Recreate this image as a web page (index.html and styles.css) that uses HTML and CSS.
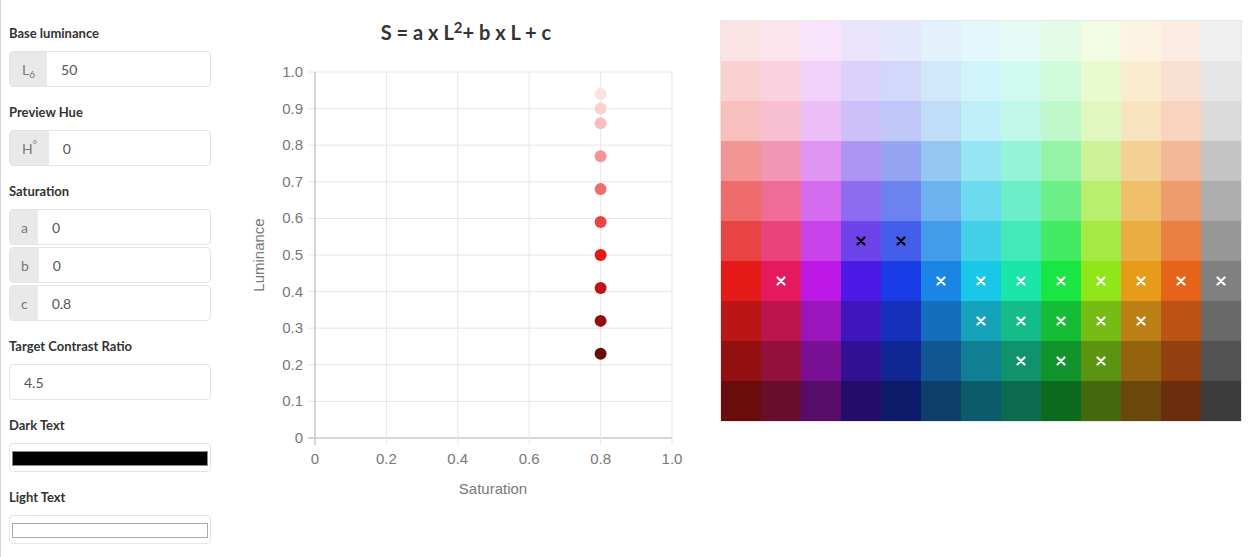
FILE: index.html
```html
<!DOCTYPE html>
<html lang="en">
<head>
  <meta charset="UTF-8" />
  <title>Saturation Curve Palette</title>
  <link rel="stylesheet" href="styles.css">
</head>
<body>
  <div class="app">
    <div class="controls">
      <div class="field">
        <label>Base luminance</label>
        <div class="input-group">
          <span class="addon">L<sub>6</sub></span>
          <input type="text" value="50" />
        </div>
      </div>

      <div class="field">
        <label>Preview Hue</label>
        <div class="input-group">
          <span class="addon">H<sup>°</sup></span>
          <input type="text" value="0" />
        </div>
      </div>

      <div class="field">
        <label>Saturation</label>
        <div class="stack">
          <div class="input-group">
            <span class="addon small">a</span>
            <input type="text" value="0" />
          </div>
          <div class="input-group">
            <span class="addon small">b</span>
            <input type="text" value="0" />
          </div>
          <div class="input-group">
            <span class="addon small">c</span>
            <input type="text" value="0.8" />
          </div>
        </div>
      </div>

      <div class="field">
        <label>Target Contrast Ratio</label>
        <div class="input-group">
          <input type="text" value="4.5" />
        </div>
      </div>

      <div class="field">
        <label>Dark Text</label>
        <div class="swatch-box"><div class="swatch dark"></div></div>
      </div>

      <div class="field">
        <label>Light Text</label>
        <div class="swatch-box"><div class="swatch light"></div></div>
      </div>
    </div>

    <div class="chart">
      <h2 class="formula">S = a x L<sup>2</sup>+ b x L + c</h2>
      <svg id="plot" width="460" height="460" viewBox="240 44 460 460">
        <g id="grid"></g>
        <g id="dots"></g>
        <text class="axis-title" x="493" y="494" text-anchor="middle">Saturation</text>
        <text class="axis-title" x="0" y="0" text-anchor="middle" transform="translate(264 255) rotate(-90)">Luminance</text>
      </svg>
    </div>

    <div class="palette" id="palette"></div>
  </div>

  <script src="app.js"></script>
</body>
</html>
```

FILE: styles.css
```css
* {
  box-sizing: border-box;
}

body {
  margin: 0;
  font-family: Lato, "Open Sans", sans-serif;
  color: #333;
  background: #fff;
}

.app {
  display: flex;
  align-items: flex-start;
  min-height: 100vh;
  border-left: 1px solid #d6d6d6;
}

.controls {
  width: 202px;
  margin-left: 8px;
  padding-top: 8px;
}

.field {
  margin-top: 16px;
}

.field label {
  display: block;
  font-size: 13px;
  font-weight: bold;
  line-height: 18px;
  margin-bottom: 9px;
}

.input-group {
  display: flex;
  height: 36px;
  border: 1px solid #e4e4e4;
  border-radius: 4px;
  overflow: hidden;
  background: #fff;
}

.stack .input-group + .input-group {
  margin-top: 2px;
}

.addon {
  display: flex;
  align-items: center;
  padding: 0 12px;
  background: #e9e9e9;
  color: #777;
  font-size: 14px;
}

.addon.small {
  padding: 0 10px 0 11px;
}

.addon sub {
  font-size: 10px;
  line-height: 0;
  margin-top: 9px;
}

.addon sup {
  font-size: 10px;
  line-height: 0;
  margin-top: -9px;
}

.input-group input {
  flex: 1;
  min-width: 0;
  border: 0;
  outline: none;
  padding: 0 14px;
  background: transparent;
  font-family: Lato, "Open Sans", sans-serif;
  font-size: 14px;
  color: #555;
}

.swatch-box {
  height: 29px;
  border: 1px solid #e4e4e4;
  border-radius: 4px;
  padding: 7px 2px 0;
}

.swatch {
  height: 15px;
  border: 1px solid #888;
}

.swatch.dark {
  background: #000;
}

.swatch.light {
  background: #fff;
  border-color: #aaa;
}

.chart {
  width: 460px;
  margin-left: 29px;
}

.formula {
  margin: 0;
  padding: 20px 8px 0 0;
  font-size: 20px;
  line-height: 24px;
  font-weight: bold;
  text-align: center;
  color: #333;
}

.formula sup {
  font-size: 15px;
  line-height: 0;
  vertical-align: 7px;
}

#plot {
  display: block;
}

#plot text {
  font-family: "Liberation Sans", Arial, sans-serif;
  font-size: 15px;
  fill: #777;
}

.palette {
  display: grid;
  grid-template-columns: repeat(13, 40px);
  grid-auto-rows: 40px;
  margin: 20px 0 0 20px;
  border: 1px solid #e8e8e8;
}

.cell {
  display: flex;
  align-items: center;
  justify-content: center;
}
```

FILE: app.js
```js
const lums = [0.94, 0.9, 0.86, 0.77, 0.68, 0.59, 0.5, 0.41, 0.32, 0.23];
const hues = [0, 340, 288, 255, 230, 208, 189, 162, 132, 85, 38, 22, null];

// cells that pass the contrast check, "row,col": colour of the mark
const marks = {
  "5,3": "#000", "5,4": "#000",
  "6,1": "#fff", "6,5": "#fff", "6,6": "#fff", "6,7": "#fff", "6,8": "#fff",
  "6,9": "#fff", "6,10": "#fff", "6,11": "#fff", "6,12": "#fff",
  "7,6": "#fff", "7,7": "#fff", "7,8": "#fff", "7,9": "#fff", "7,10": "#fff",
  "8,7": "#fff", "8,8": "#fff", "8,9": "#fff"
};

function colour(h, l) {
  if (h === null) return `hsl(0, 0%, ${l * 100}%)`;
  return `hsl(${h}, 80%, ${l * 100}%)`;
}

const palette = document.getElementById("palette");
lums.forEach((l, r) => {
  hues.forEach((h, c) => {
    const cell = document.createElement("div");
    cell.className = "cell";
    cell.style.background = colour(h, l);
    const m = marks[r + "," + c];
    if (m) {
      cell.innerHTML = `<svg width="10" height="10" viewBox="0 0 10 10">
        <path d="M1.5 1.5 L8.5 8.5 M8.5 1.5 L1.5 8.5" stroke="${m}" stroke-width="2.2" stroke-linecap="round"/></svg>`;
    }
    palette.appendChild(cell);
  });
});

// chart
const NS = "http://www.w3.org/2000/svg";
const plot = { left: 315, right: 672, top: 72, bottom: 438 };
const gridLayer = document.getElementById("grid");

function el(name, attrs, parent) {
  const e = document.createElementNS(NS, name);
  for (const k in attrs) e.setAttribute(k, attrs[k]);
  parent.appendChild(e);
  return e;
}

for (let i = 0; i <= 10; i++) {
  const y = plot.bottom - (plot.bottom - plot.top) * i / 10;
  el("line", { x1: plot.left - 7, x2: plot.right, y1: y, y2: y, stroke: i === 0 ? "#c8c8c8" : "#e6e6e6", "stroke-width": i === 0 ? 1.5 : 1 }, gridLayer);
  const t = el("text", { x: 303, y: y + 5, "text-anchor": "end" }, gridLayer);
  t.textContent = i === 0 ? "0" : (i / 10).toFixed(1);
}

for (let i = 0; i <= 5; i++) {
  const x = plot.left + (plot.right - plot.left) * i / 5;
  el("line", { x1: x, x2: x, y1: plot.top, y2: plot.bottom + 7, stroke: i === 0 ? "#c8c8c8" : "#e6e6e6", "stroke-width": i === 0 ? 1.5 : 1 }, gridLayer);
  const t = el("text", { x: x, y: 464, "text-anchor": "middle" }, gridLayer);
  t.textContent = i === 0 ? "0" : (i / 5).toFixed(1);
}

const dots = document.getElementById("dots");
lums.forEach(l => {
  el("circle", {
    cx: plot.left + (plot.right - plot.left) * 0.8,
    cy: plot.bottom - (plot.bottom - plot.top) * l,
    r: 6,
    fill: colour(0, l)
  }, dots);
});
```
